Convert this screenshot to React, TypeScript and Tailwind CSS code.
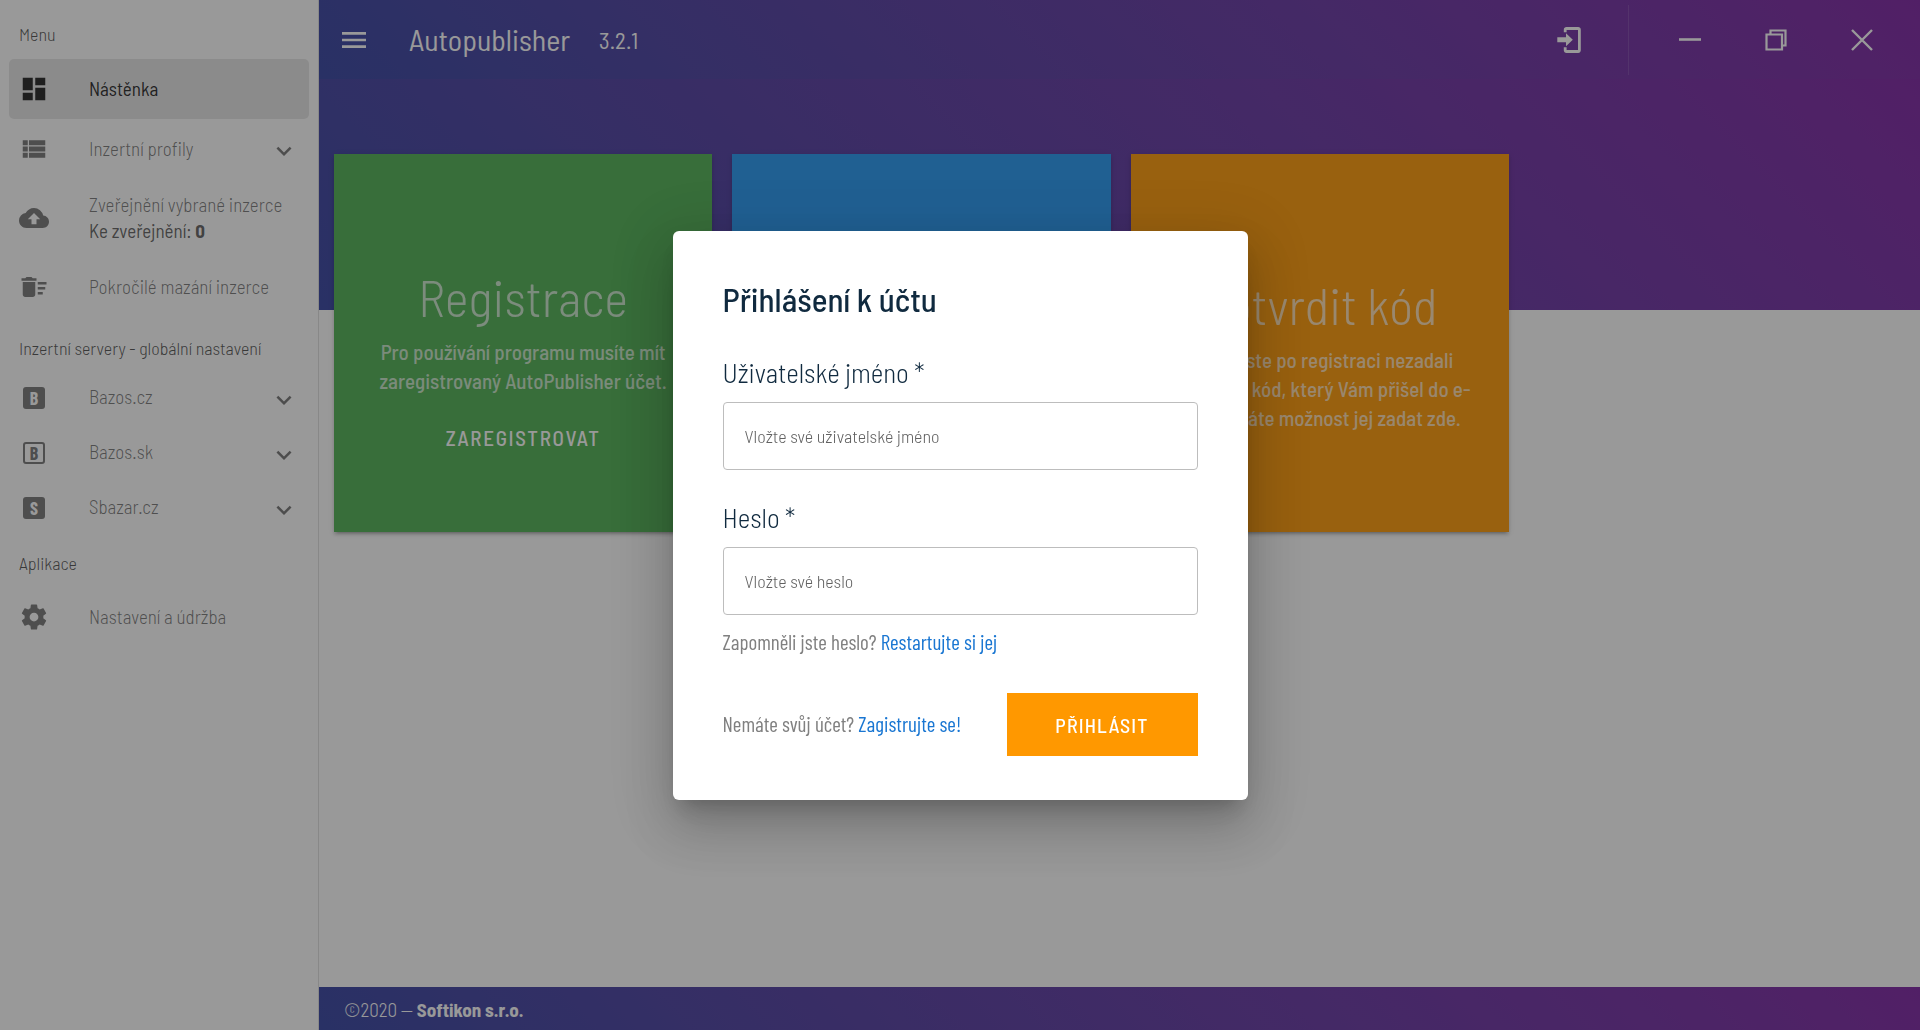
import React from "react";
import {
  MdCloudUpload,
  MdDashboard,
  MdDeleteSweep,
  MdExpandMore,
  MdMenu,
  MdViewList,
} from "react-icons/md";

const COG_PATH =
  "M12,15.5A3.5,3.5 0 0,1 8.5,12A3.5,3.5 0 0,1 12,8.5A3.5,3.5 0 0,1 15.5,12A3.5,3.5 0 0,1 12,15.5M19.43,12.97C19.47,12.65 19.5,12.33 19.5,12C19.5,11.67 19.47,11.34 19.43,11L21.54,9.37C21.73,9.22 21.78,8.95 21.66,8.73L19.66,5.27C19.54,5.05 19.27,4.96 19.05,5.05L16.56,6.05C16.04,5.66 15.5,5.32 14.87,5.07L14.5,2.42C14.46,2.18 14.25,2 14,2H10C9.75,2 9.54,2.18 9.5,2.42L9.13,5.07C8.5,5.32 7.96,5.66 7.44,6.05L4.95,5.05C4.73,4.96 4.46,5.05 4.34,5.27L2.34,8.73C2.21,8.95 2.27,9.22 2.46,9.37L4.57,11C4.53,11.34 4.5,11.67 4.5,12C4.5,12.33 4.53,12.65 4.57,12.97L2.46,14.63C2.27,14.78 2.21,15.05 2.34,15.27L4.34,18.73C4.46,18.95 4.73,19.03 4.95,18.95L7.44,17.94C7.96,18.34 8.5,18.68 9.13,18.93L9.5,21.58C9.54,21.82 9.75,22 10,22H14C14.25,22 14.46,21.82 14.5,21.58L14.87,18.93C15.5,18.67 16.04,18.34 16.56,17.94L19.05,18.95C19.27,19.03 19.54,18.95 19.66,18.73L21.66,15.27C21.78,15.05 21.73,14.78 21.54,14.63L19.43,12.97Z";

function CogIcon() {
  return (
    <svg viewBox="0 0 24 24" className="size-[30px]" fill="currentColor" aria-hidden="true">
      <path d={COG_PATH} />
    </svg>
  );
}

function LetterBox({ letter, outlined }: { letter: string; outlined?: boolean }) {
  return (
    <span
      aria-hidden="true"
      className={
        "mx-1 flex size-[22px] items-center justify-center rounded-[3px] font-['Barlow_Condensed',sans-serif] text-lg leading-none font-bold " +
        (outlined ? "border-2 border-[#757575] text-[#757575]" : "bg-[#757575] text-white")
      }
    >
      {letter}
    </span>
  );
}

function LoginIcon() {
  return (
    <svg viewBox="0 0 24 26" className="h-[26px] w-6" fill="none" aria-hidden="true">
      <path
        d="M8.2 5.2V2.7a1.2 1.2 0 0 1 1.2-1.2H21.2a1.2 1.2 0 0 1 1.2 1.2V23.3a1.2 1.2 0 0 1-1.2 1.2H9.4A1.2 1.2 0 0 1 8.2 23.3V20.3"
        stroke="currentColor"
        strokeWidth="2.8"
      />
      <path d="M0.3 10.2H9V6.2L15.8 12.7 9 19.2V15.2H0.3z" fill="currentColor" />
    </svg>
  );
}

function MinimizeIcon() {
  return (
    <svg viewBox="0 0 22 22" className="size-[22px]" aria-hidden="true">
      <path d="M0 10.5H22" stroke="currentColor" strokeWidth="2.6" />
    </svg>
  );
}

function RestoreIcon() {
  return (
    <svg viewBox="0 0 22 22" className="size-[22px]" fill="none" stroke="currentColor" strokeWidth="2.2" aria-hidden="true">
      <path d="M1.5 5.5H17V20.5H1.5z" />
      <path d="M5.5 5V1.5H20.5V16.5H17" />
    </svg>
  );
}

function CloseIcon() {
  return (
    <svg viewBox="0 0 22 22" className="size-[22px]" fill="none" stroke="currentColor" strokeWidth="2.4" aria-hidden="true">
      <path d="M1 1L21 21M21 1L1 21" />
    </svg>
  );
}

type NavRowProps = {
  icon: React.ReactNode;
  label: string;
  className: string;
  active?: boolean;
  expandable?: boolean;
};

function NavRow({ icon, label, className, active, expandable }: NavRowProps) {
  return (
    <button
      type="button"
      aria-current={active ? "page" : undefined}
      className={
        "flex w-full items-center rounded-[5px] px-[10px] text-left text-[19px] " +
        (active ? "bg-black/10 text-black/87 " : "font-light text-black/54 ") +
        className
      }
    >
      <span className={"w-[70px] shrink-0 " + (active ? "" : "text-[#757575]")}>{icon}</span>
      <span className="grow">{label}</span>
      {expandable && <MdExpandMore className="mt-1 size-[30px] text-black/55" aria-hidden="true" />}
    </button>
  );
}

function Sidebar() {
  return (
    <nav
      aria-label="Menu"
      className="flex w-[319px] shrink-0 flex-col border-r border-black/12 bg-white px-[9px] text-[#212121]"
    >
      <h2 className="flex h-[59px] items-end px-[10px] pb-[15px] text-lg leading-5 font-light text-black/70">Menu</h2>
      <NavRow className="h-[60px]" active icon={<MdDashboard className="size-[30px]" />} label="Nástěnka" />
      <NavRow className="h-[60px]" expandable icon={<MdViewList className="size-[30px]" />} label="Inzertní profily" />
      <button type="button" className="flex h-[78px] w-full items-center pl-[10px] text-left text-[19px] leading-[26px]">
        <span className="w-[70px] shrink-0 text-[#757575]">
          <MdCloudUpload className="size-[30px]" />
        </span>
        <span className="flex flex-col">
          <span className="font-light whitespace-nowrap text-black/54">Zveřejnění vybrané inzerce</span>
          <span className="text-black/65">
            Ke zveřejnění: <b>0</b>
          </span>
        </span>
      </button>
      <NavRow className="h-[60px]" icon={<MdDeleteSweep className="size-[30px]" />} label="Pokročilé mazání inzerce" />
      <h2 className="flex h-[53px] items-end px-[10px] pb-3 text-lg leading-5 font-light whitespace-nowrap text-black/70">
        Inzertní servery - globální nastavení
      </h2>
      <NavRow className="h-[55px]" expandable icon={<LetterBox letter="B" />} label="Bazos.cz" />
      <NavRow className="h-[55px]" expandable icon={<LetterBox letter="B" outlined />} label="Bazos.sk" />
      <NavRow className="h-[55px]" expandable icon={<LetterBox letter="S" />} label="Sbazar.cz" />
      <h2 className="flex h-[52px] items-end px-[10px] pb-[14px] text-lg leading-5 font-light text-black/70">Aplikace</h2>
      <NavRow className="h-[60px]" icon={<CogIcon />} label="Nastavení a údržba" />
    </nav>
  );
}

function TopBar() {
  const control = "flex h-[79px] w-[86px] items-center justify-center";
  return (
    <header className="flex h-[79px] items-center bg-linear-45 from-[#303f9f] to-[#7b1fa2] pr-[15px] text-white">
      <button type="button" aria-label="Menu" className="ml-[19px] flex w-8 justify-center">
        <MdMenu className="size-8" />
      </button>
      <h1 className="ml-[39px] pb-[2px] text-[30px] leading-9">Autopublisher</h1>
      <span className="ml-[29px] text-[23px] leading-9">3.2.1</span>
      <button type="button" aria-label="Přihlásit" className={control + " mr-4 ml-auto"}>
        <LoginIcon />
      </button>
      <div className="mr-[18px] h-[70px] w-px bg-white/12" />
      <button type="button" aria-label="Minimalizovat" className={control}>
        <MinimizeIcon />
      </button>
      <button type="button" aria-label="Obnovit" className={control}>
        <RestoreIcon />
      </button>
      <button type="button" aria-label="Zavřít" className={control}>
        <CloseIcon />
      </button>
    </header>
  );
}

const cardShadow = "shadow-[0_4px_2px_-3px_rgba(0,0,0,0.2),0_3px_3px_rgba(0,0,0,0.14),0_1px_6px_rgba(0,0,0,0.12)]";

function Cards() {
  return (
    <div className="-mt-[156px] grid grid-cols-4 gap-5 pr-[13px] pl-[15px] text-center">
      <section className={"flex aspect-square flex-col items-center bg-[#4caf50] pt-[111px] text-white/70 " + cardShadow}>
        <h2 className="text-[51px] leading-[64px] font-light">Registrace</h2>
        <p className="mt-2 text-[21px] leading-[29px] font-medium whitespace-nowrap">
          Pro používání programu musíte mít
          <br />
          zaregistrovaný AutoPublisher účet.
        </p>
        <button type="button" className="mt-[21px] h-11 px-5 text-[21px] font-medium tracking-[0.08em] text-white">
          ZAREGISTROVAT
        </button>
      </section>
      <section className={"aspect-square bg-[#2196f3] " + cardShadow} />
      <section className={"flex aspect-square flex-col items-center bg-[#ff9800] pt-[119px] text-white/70 " + cardShadow}>
        <h2 className="text-[51px] leading-[64px] font-light">Potvrdit kód</h2>
        <p className="mt-2 text-[21px] leading-[29px] font-medium whitespace-nowrap">
          Pokud jste po registraci nezadali
          <br />
          ověřovací kód, který Vám přišel do e-
          <br />
          mailu, máte možnost jej zadat zde.
        </p>
      </section>
    </div>
  );
}

function Field({ id, type, label, placeholder }: { id: string; type: string; label: string; placeholder: string }) {
  return (
    <>
      <label htmlFor={id} className="text-[27px] leading-[34px] font-light text-[#102a3f]">
        {label}
      </label>
      <input
        id={id}
        type={type}
        placeholder={placeholder}
        className="mt-[13px] h-[68px] w-full rounded border border-[#bdbdbd] px-[21px] text-lg font-light outline-none placeholder:text-[#616161]"
      />
    </>
  );
}

function LoginDialog() {
  return (
    <div className="fixed inset-0 flex items-center justify-center bg-[#212121]/46">
      <form
        role="dialog"
        aria-labelledby="login-title"
        className="flex w-[575px] flex-col rounded-md bg-white px-[50px] pt-12 pb-11 shadow-[0_14px_19px_-9px_rgba(0,0,0,0.2),0_30px_48px_4px_rgba(0,0,0,0.14),0_11px_58px_10px_rgba(0,0,0,0.12)]"
      >
        <h2 id="login-title" className="mb-9 text-[33px] leading-10 font-medium text-[#102a3f]">
          Přihlášení k účtu
        </h2>
        <Field id="username" type="text" label="Uživatelské jméno *" placeholder="Vložte své uživatelské jméno" />
        <div className="h-[30px]" />
        <Field id="password" type="password" label="Heslo *" placeholder="Vložte své heslo" />
        <p className="mt-3 font-['Barlow_Condensed',sans-serif] text-[21px] leading-[30px] text-[#808080]">
          Zapomněli jste heslo?{" "}
          <a href="#reset" className="text-[#1976d2]">
            Restartujte si jej
          </a>
        </p>
        <div className="mt-9 flex items-center justify-between">
          <p className="font-['Barlow_Condensed',sans-serif] text-[21px] leading-[30px] text-[#808080]">
            Nemáte svůj účet?{" "}
            <a href="#register" className="text-[#1976d2]">
              Zagistrujte se!
            </a>
          </p>
          <button type="button" className="h-[63px] w-[191px] bg-[#ff9800] pt-[2px] text-xl font-medium tracking-[0.06em] text-white">
            PŘIHLÁSIT
          </button>
        </div>
      </form>
    </div>
  );
}

export default function App() {
  return (
    <div className="flex min-h-screen bg-white font-['Barlow_Semi_Condensed','Roboto_Condensed',sans-serif]">
      <Sidebar />
      <div className="flex min-w-0 grow flex-col">
        <TopBar />
        <main className="grow">
          <div className="h-[231px] bg-linear-45 from-[#303f9f] to-[#7b1fa2]" />
          <Cards />
        </main>
        <footer className="flex h-[43px] items-center bg-linear-45 from-[#303f9f] to-[#7b1fa2] px-[25px] pt-[3px] text-[19px] font-light text-white">
          <span>
            ©2020 — <b className="font-bold">Softikon s.r.o.</b>
          </span>
        </footer>
      </div>
      <LoginDialog />
    </div>
  );
}
